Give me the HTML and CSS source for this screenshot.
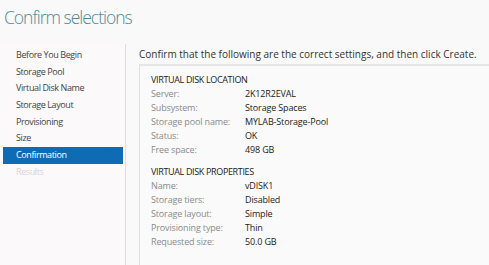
FILE: index.html
```html
<!DOCTYPE html>
<html lang="en">
<head>
    <meta charset="UTF-8">
    <title>Confirm selections</title>
    <link rel="stylesheet" href="styles.css">
</head>
<body>
    <h1 class="page-title">Confirm selections</h1>

    <div class="wizard">
        <ul class="steps">
            <li>Before You Begin</li>
            <li>Storage Pool</li>
            <li>Virtual Disk Name</li>
            <li>Storage Layout</li>
            <li>Provisioning</li>
            <li>Size</li>
            <li class="active">Confirmation</li>
            <li class="disabled">Results</li>
        </ul>

        <div class="content">
            <p class="intro">Confirm that the following are the correct settings, and then click Create.</p>

            <div class="summary">
                <h3>VIRTUAL DISK LOCATION</h3>
                <dl>
                    <dt>Server:</dt><dd>2K12R2EVAL</dd>
                    <dt>Subsystem:</dt><dd>Storage Spaces</dd>
                    <dt>Storage pool name:</dt><dd>MYLAB-Storage-Pool</dd>
                    <dt>Status:</dt><dd>OK</dd>
                    <dt>Free space:</dt><dd>498 GB</dd>
                </dl>

                <h3>VIRTUAL DISK PROPERTIES</h3>
                <dl>
                    <dt>Name:</dt><dd>vDISK1</dd>
                    <dt>Storage tiers:</dt><dd>Disabled</dd>
                    <dt>Storage layout:</dt><dd>Simple</dd>
                    <dt>Provisioning type:</dt><dd>Thin</dd>
                    <dt>Requested size:</dt><dd>50.0 GB</dd>
                </dl>
            </div>
        </div>
    </div>
</body>
</html>
```

FILE: styles.css
```css
html, body {
    height: 100%;
}
body {
    margin: 0;
    font-family: "Open Sans", "Noto Sans", sans-serif;
    background-color: #f9f9f9;
    color: #333;
    display: flex;
    flex-direction: column;
    overflow: hidden;
}
.page-title {
    margin: 0;
    padding: 5px 0 0 4px;
    height: 39px;
    font-size: 17.5px;
    font-weight: 300;
    color: #4f8a9a;
    letter-spacing: -1px;
    white-space: nowrap;
}
.wizard {
    flex-grow: 1;
    display: flex;
}
.steps {
    list-style: none;
    margin: 0;
    padding: 3px 0 0 3px;
    width: 122px;
    flex-shrink: 0;
    background-color: #fbf9fa;
    border-right: 1px solid #dcdcdc;
}
.steps li {
    height: 16.7px;
    line-height: 16px;
    margin-right: 2px;
    padding-left: 13px;
    font-size: 9px;
    letter-spacing: -0.4px;
    color: #444;
    white-space: nowrap;
}
.steps li.active {
    background-color: #0f6cb4;
    color: #fff;
}
.steps li.disabled {
    color: #d6d6d6;
}
.content {
    flex-grow: 1;
    display: flex;
    flex-direction: column;
    padding-left: 13px;
    min-width: 0;
}
.intro {
    margin: 0;
    padding-top: 2px;
    height: 18px;
    line-height: 16px;
    font-size: 10px;
    color: #333;
    white-space: nowrap;
}
.summary {
    flex-grow: 1;
    background-color: #fafafa;
    border-top: 2px solid #e6e6e6;
    border-left: 1px solid #dedede;
    padding: 6px 0 0 11px;
}
.summary h3 {
    margin: 0;
    height: 15px;
    line-height: 15px;
    font-size: 9px;
    font-weight: 400;
    letter-spacing: -0.35px;
    color: #222;
}
.summary dl {
    display: grid;
    grid-template-columns: 94px auto;
    grid-auto-rows: 14px;
    margin: 0 0 7px 0;
    font-size: 9px;
    line-height: 14px;
    letter-spacing: -0.15px;
}
.summary dt {
    color: #8a8a8a;
}
.summary dd {
    margin: 0;
    color: #222;
}
```
